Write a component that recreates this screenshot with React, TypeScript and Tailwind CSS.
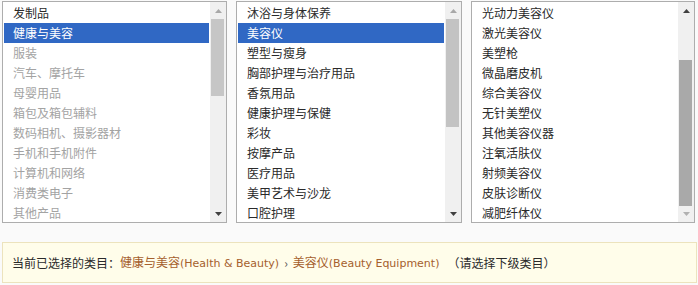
import React from "react";

type Item = { t: string; sel?: boolean; dim?: boolean };

const col1: Item[] = [
  { t: "发制品" },
  { t: "健康与美容", sel: true },
  { t: "服装", dim: true },
  { t: "汽车、摩托车", dim: true },
  { t: "母婴用品", dim: true },
  { t: "箱包及箱包辅料", dim: true },
  { t: "数码相机、摄影器材", dim: true },
  { t: "手机和手机附件", dim: true },
  { t: "计算机和网络", dim: true },
  { t: "消费类电子", dim: true },
  { t: "其他产品", dim: true },
];
const col2: Item[] = [
  { t: "沐浴与身体保养" },
  { t: "美容仪", sel: true },
  { t: "塑型与瘦身" },
  { t: "胸部护理与治疗用品" },
  { t: "香氛用品" },
  { t: "健康护理与保健" },
  { t: "彩妆" },
  { t: "按摩产品" },
  { t: "医疗用品" },
  { t: "美甲艺术与沙龙" },
  { t: "口腔护理" },
];
const col3: Item[] = [
  { t: "光动力美容仪" },
  { t: "激光美容仪" },
  { t: "美塑枪" },
  { t: "微晶磨皮机" },
  { t: "综合美容仪" },
  { t: "无针美塑仪" },
  { t: "其他美容仪器" },
  { t: "注氧活肤仪" },
  { t: "射频美容仪" },
  { t: "皮肤诊断仪" },
  { t: "减肥纤体仪" },
];

function Arrow({ up, color }: { up?: boolean; color: string }) {
  return (
    <svg width="7" height="4" viewBox="0 0 7 4">
      {up ? (
        <polygon points="0,4 7,4 3.5,0" fill={color} />
      ) : (
        <polygon points="0,0 7,0 3.5,4" fill={color} />
      )}
    </svg>
  );
}

function Box({
  items,
  width,
  thumbTop,
  thumbH,
  thumbColor,
  upColor,
  downColor,
}: {
  items: Item[];
  width: number;
  thumbTop: number;
  thumbH: number;
  thumbColor: string;
  upColor: string;
  downColor: string;
}) {
  return (
    <div
      className="flex h-[222px] border border-[#adadad] bg-white"
      style={{ width }}
    >
      <div className="flex-1 flex flex-col p-px">
        {items.map((it, i) => (
          <div
            key={i}
            className={
              "h-[20px] leading-[20px] pl-[9px] whitespace-nowrap " +
              (it.sel
                ? "bg-[#3068c4] text-white"
                : it.dim
                ? "text-[#a3a3a3]"
                : "text-[#2a2a2a]")
            }
          >
            {it.t}
          </div>
        ))}
      </div>
      <div className="w-[16px] bg-[#f0f0f0] flex flex-col items-center relative">
        <div className="h-[17px] flex items-center justify-center w-full">
          <Arrow up color={upColor} />
        </div>
        <div
          className="absolute left-[1px] w-[13px]"
          style={{ top: thumbTop, height: thumbH, background: thumbColor }}
        />
        <div className="flex-1" />
        <div className="h-[17px] flex items-center justify-center w-full">
          <Arrow color={downColor} />
        </div>
      </div>
    </div>
  );
}

export default function App() {
  return (
    <div
      className="w-[698px] h-[285px] bg-[#fafafa] text-[12px] overflow-hidden"
      style={{ fontFamily: '"Noto Sans CJK SC", "Liberation Sans", sans-serif' }}
    >
      <div className="flex pl-[2px] pt-[1px] gap-[9px]">
        <Box
          items={col1}
          width={225}
          thumbTop={17}
          thumbH={77}
          thumbColor="#c6c6c6"
          upColor="#a8a8a8"
          downColor="#404040"
        />
        <Box
          items={col2}
          width={226}
          thumbTop={17}
          thumbH={108}
          thumbColor="#c3c3c3"
          upColor="#a8a8a8"
          downColor="#404040"
        />
        <Box
          items={col3}
          width={224}
          thumbTop={58}
          thumbH={146}
          thumbColor="#a9a9a9"
          upColor="#404040"
          downColor="#b0b0b0"
        />
      </div>
      <div className="mt-[19px] ml-[2px] w-[695px] h-[41px] border border-[#ece3bd] bg-[#fffdea] flex items-center pl-[9px] whitespace-nowrap">
        <span className="text-[#2a2a2a]">当前已选择的类目：</span>
        <span className="text-[#a5602d]">
          健康与美容<span style={{ fontFamily: '"DejaVu Sans", sans-serif', fontSize: 11 }}>(Health &amp; Beauty)</span>
        </span>
        <span className="text-[#555] mx-[5px]">›</span>
        <span className="text-[#a5602d]">
          美容仪<span style={{ fontFamily: '"DejaVu Sans", sans-serif', fontSize: 11 }}>(Beauty Equipment)</span>
        </span>
        <span className="text-[#2a2a2a] ml-[8px]">（请选择下级类目）</span>
      </div>
    </div>
  );
}
